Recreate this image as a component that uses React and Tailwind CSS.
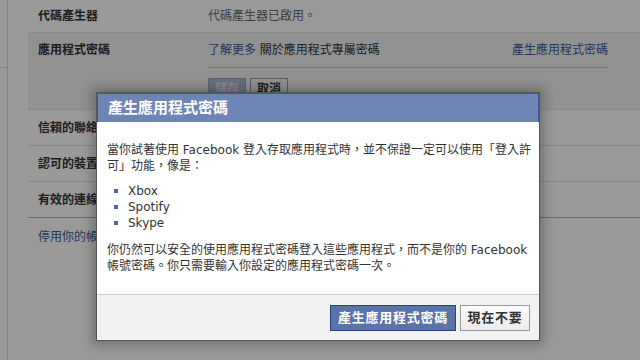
import React from "react";

const rows = ["信賴的聯絡人", "認可的裝置", "有效的連線"];
const apps = ["Xbox", "Spotify", "Skype"];

const App = () => {
  return (
    <div className="relative w-[640px] h-[360px] overflow-hidden bg-white text-[12px] leading-4 text-[#333] font-['DejaVu_Sans','Noto_Sans_CJK_TC',sans-serif]">
      <div className="flex h-full">
        {/* left nav edge */}
        <div className="w-[8px] shrink-0 border-r border-[#d8d8d8]">
          <div className="h-[68px] border-b border-[#d8d8d8]"></div>
        </div>

        <div className="ml-[20px] w-[640px] shrink-0">
          <div className="flex h-8 items-center px-[10px]">
            <div className="w-[170px] font-bold">代碼產生器</div>
            <div className="text-[#666]">代碼產生器已啟用。</div>
          </div>

          <div className="flex border-y border-[#e2e2e2] bg-[#f2f2f2] px-[10px] pt-[9px] pb-[9px]">
            <div className="w-[170px] font-bold">應用程式密碼</div>
            <div className="w-[400px]">
              <div className="flex justify-between border-b border-[#c4c4c4] pb-[9px]">
                <div>
                  <span className="text-[#3b5998]">了解更多</span>{" "}
                  <span>關於應用程式專屬密碼</span>
                </div>
                <span className="text-[#3b5998]">產生應用程式密碼</span>
              </div>
              <div className="mt-[10px] flex gap-[4px]">
                <button className="h-[22px] w-[38px] border border-[#9aa8c6] bg-[#aebbd5] font-bold text-[#e2e7f0]">
                  儲存
                </button>
                <button className="h-[22px] w-[38px] border border-[#999] bg-[#f2f2f2] font-bold text-[#333]">
                  取消
                </button>
              </div>
            </div>
          </div>

          {rows.map((r, i) => (
            <div
              key={r}
              className={`flex h-[36px] items-center px-[10px] border-b ${
                i === rows.length - 1 ? "border-[#b3b3b3]" : "border-[#e2e2e2]"
              }`}
            >
              <div className="w-[170px] font-bold">{r}</div>
            </div>
          ))}

          <div className="px-[10px] pt-[11px] text-[#3b5998]">停用你的帳號</div>
        </div>
      </div>

      {/* dim overlay */}
      <div className="absolute inset-0 bg-black/40"></div>

      {/* dialog */}
      <div className="absolute left-[96px] top-[92px] w-[444px] border border-[#555] bg-white shadow-[0_0_10px_4px_rgba(0,0,0,0.25)]">
        <div className="flex h-[29px] items-center border border-[#3b5998] border-b-0 bg-[#6d84b4] px-[10px] text-[15px] font-bold text-white">
          產生應用程式密碼
        </div>
        <div className="pl-[10px] pr-[3px] pt-5 pb-5 text-[#333]">
          <p>
            當你試著使用 Facebook 登入存取應用程式時，並不保證一定可以使用「登入許可」功能，像是：
          </p>
          <ul className="mt-[9px]">
            {apps.map((a) => (
              <li key={a} className="flex items-center">
                <span className="ml-[7px] mr-[10px] h-[4px] w-[4px] bg-[#4b67a1]"></span>
                {a}
              </li>
            ))}
          </ul>
          <p className="mt-[11px]">
            你仍然可以安全的使用應用程式密碼登入這些應用程式，而不是你的 Facebook 帳號密碼。你只需要輸入你設定的應用程式密碼一次。
          </p>
        </div>
        <div className="flex justify-end gap-[4px] border-t border-[#ccc] bg-[#f2f2f2] pt-[10px] pb-[9px] pr-[9px]">
          <button className="h-[26px] w-[126px] border border-[#29447e] bg-[#5b74a8] text-[13px] tracking-[0.75px] font-bold text-white">
            產生應用程式密碼
          </button>
          <button className="h-[26px] w-[70px] border border-[#999] bg-gradient-to-b from-[#fafafa] to-[#ececec] text-[13px] tracking-[0.75px] font-bold text-[#333]">
            現在不要
          </button>
        </div>
      </div>
    </div>
  );
};

export default App;
